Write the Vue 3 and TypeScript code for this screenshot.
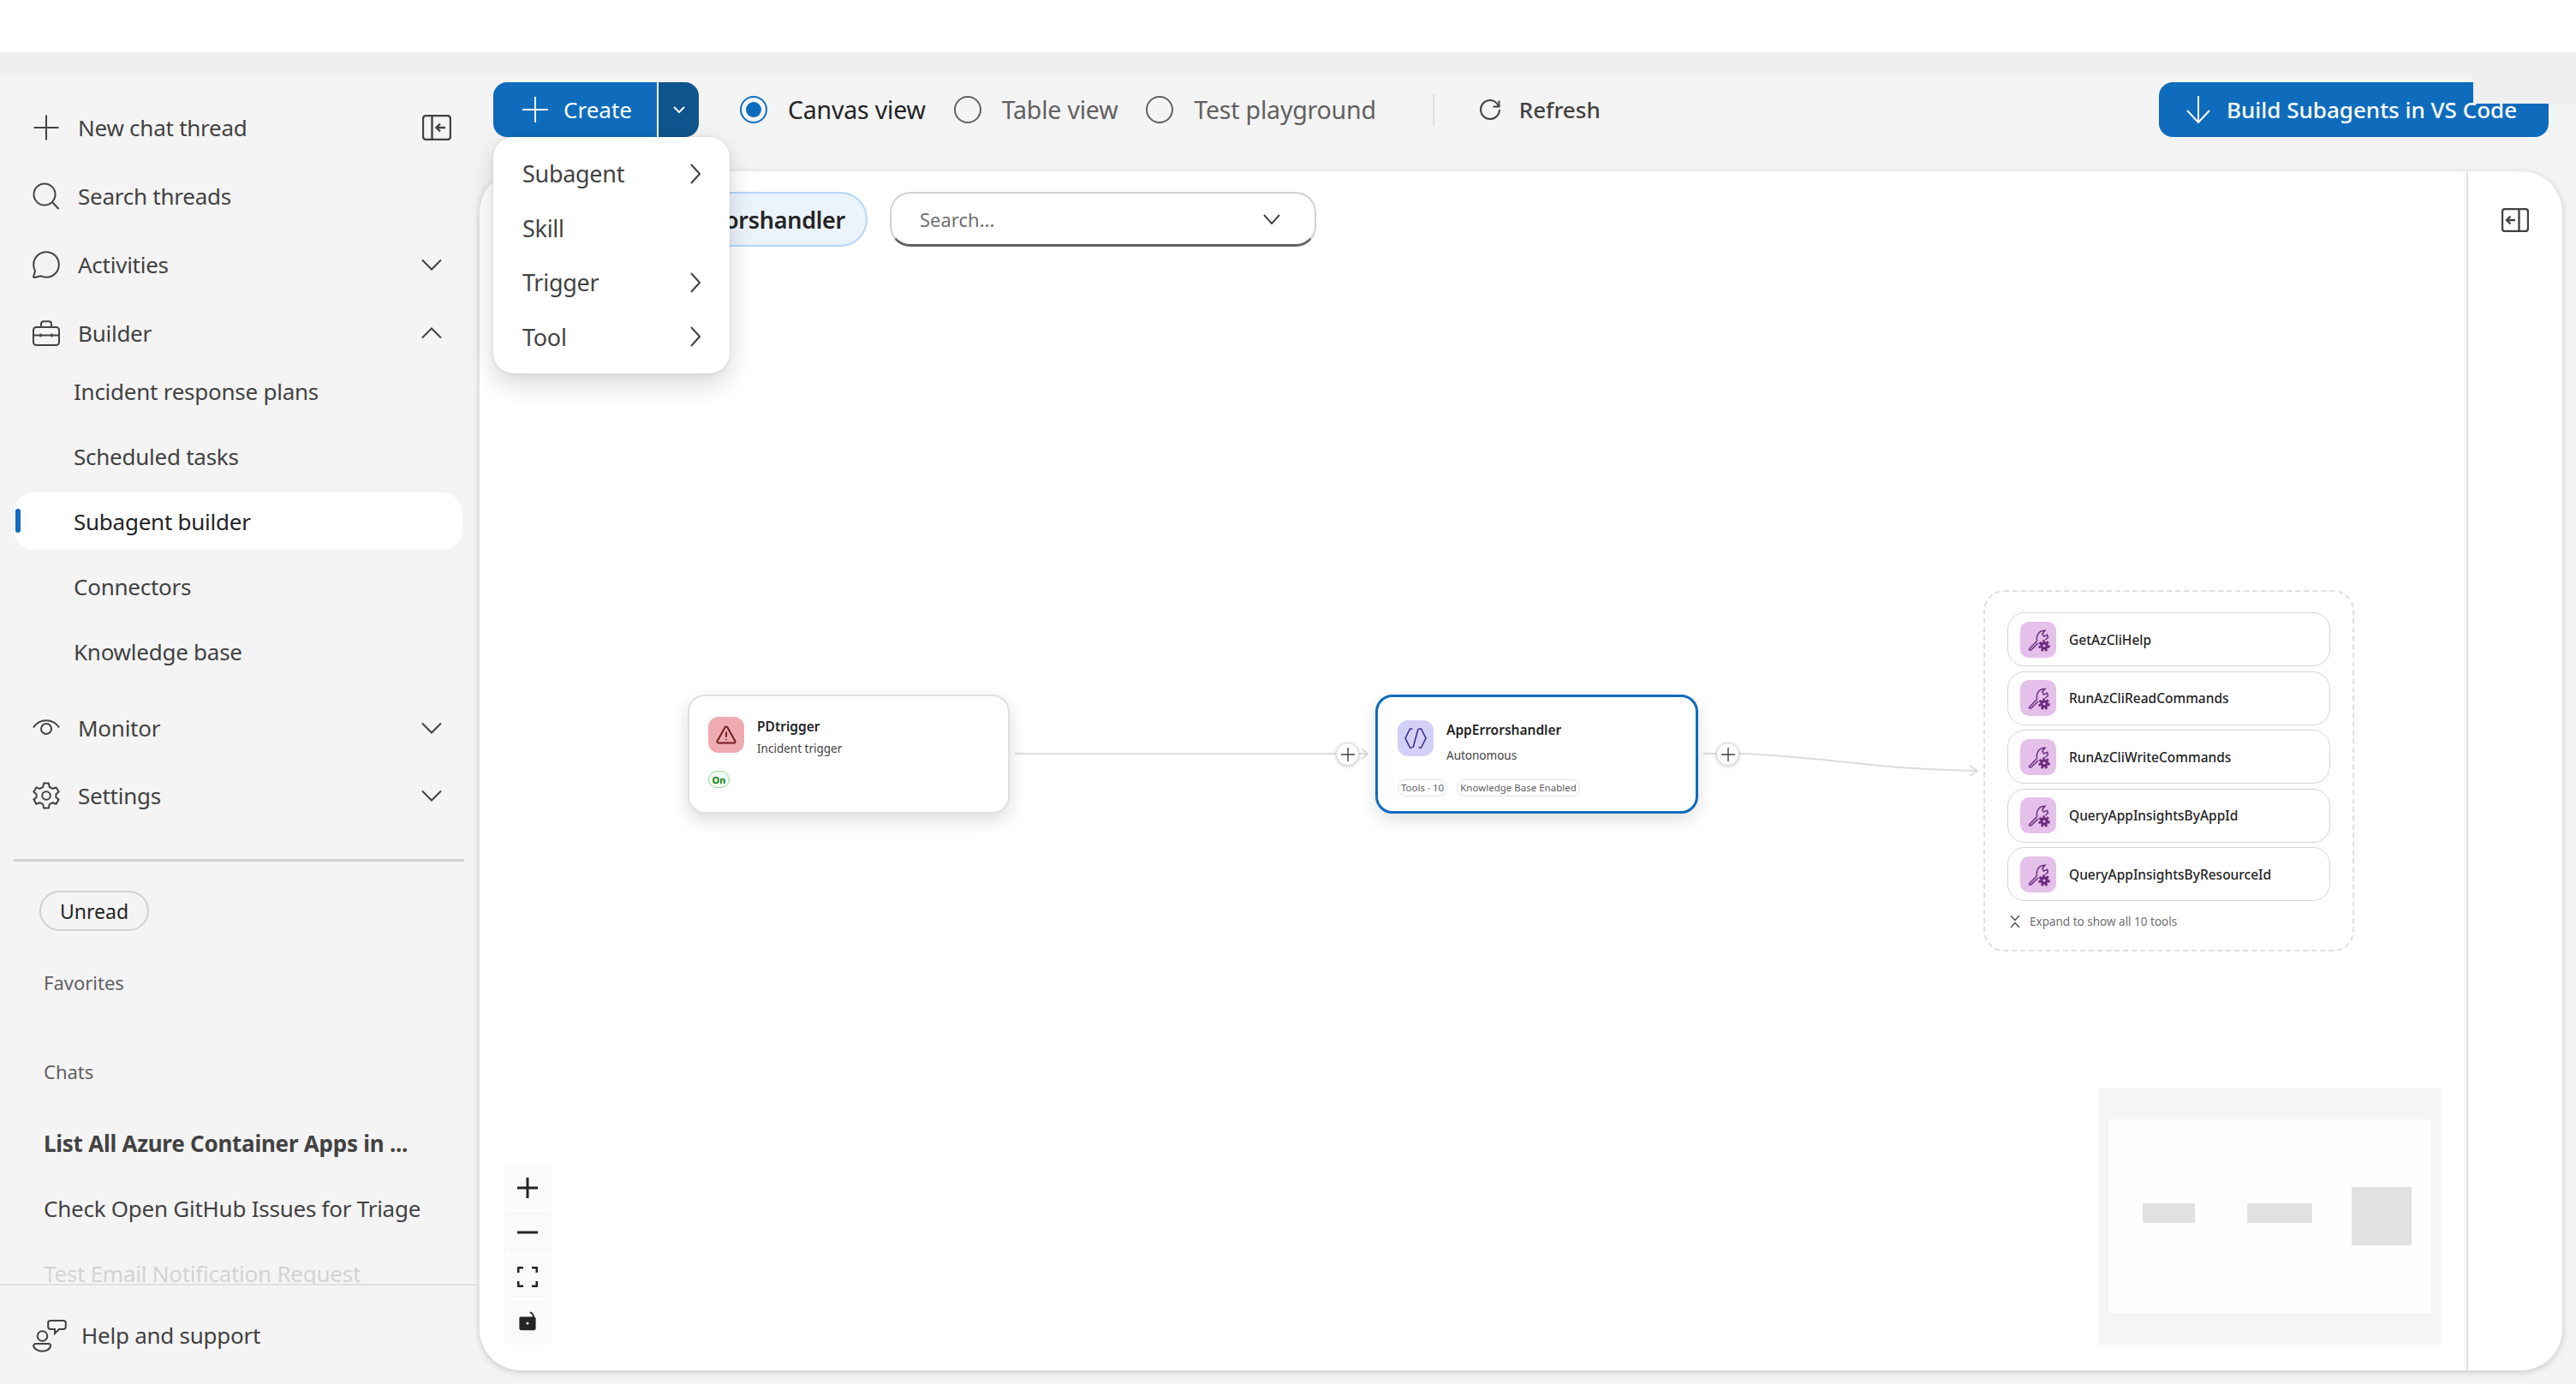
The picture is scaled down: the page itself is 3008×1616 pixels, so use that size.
<script setup lang="ts">
interface SubItem { label: string; active?: boolean }
const subItems: SubItem[] = [
  { label: 'Incident response plans' },
  { label: 'Scheduled tasks' },
  { label: 'Subagent builder', active: true },
  { label: 'Connectors' },
  { label: 'Knowledge base' },
]
const menuItems = [
  { label: 'Subagent', sub: true },
  { label: 'Skill', sub: false },
  { label: 'Trigger', sub: true },
  { label: 'Tool', sub: true },
]
const tools: string[] = [
  'GetAzCliHelp',
  'RunAzCliReadCommands',
  'RunAzCliWriteCommands',
  'QueryAppInsightsByAppId',
  'QueryAppInsightsByResourceId',
]
</script>

<template>
  <div class="app">
    <div class="topbar"></div>
    <div class="band"></div>
    <div class="patch"></div>
    <div class="main">
      <aside class="sidebar">
        <nav class="nav">
          <div class="row">
            <svg class="ico" viewBox="0 0 32 32"><path d="M16 1.5V30.5M1.5 16H30.5" /></svg>
            <span>New chat thread</span>
            <svg class="collapse" viewBox="0 0 34 30"><rect x="1" y="1" width="32" height="28" rx="3.5" /><path d="M11.5 1V29M27 15H17M21 10.5L16.5 15L21 19.5" /></svg>
          </div>
          <div class="row">
            <svg class="ico" viewBox="0 0 32 32"><circle cx="14" cy="14" r="12.5" /><path d="M23 23L30.5 31" /></svg>
            <span>Search threads</span>
          </div>
          <div class="row">
            <svg class="ico" viewBox="0 0 32 32"><path d="M16 1.2C24.2 1.2 30.8 7.8 30.8 16S24.2 30.8 16 30.8C13.6 30.8 11.3 30.2 9.3 29.2L2.4 31C1.6 31.2 1 30.6 1.2 29.8L3 23.5C1.8 21.3 1.2 18.8 1.2 16C1.2 7.8 7.8 1.2 16 1.2Z" /></svg>
            <span>Activities</span>
            <svg class="chev" viewBox="0 0 24 14"><path d="M1 1.5L12 12.5L23 1.5" /></svg>
          </div>
          <div class="row">
            <svg class="ico" viewBox="0 0 32 30"><rect x="1" y="8" width="30" height="21" rx="3.5" /><path d="M10 8V4C10 2.4 11.2 1.2 13 1.2H19C20.8 1.2 22 2.4 22 4V8M1 17.5H31M9.5 15.5V19.5M22.5 15.5V19.5" /></svg>
            <span>Builder</span>
            <svg class="chev" viewBox="0 0 24 14"><path d="M1 12.5L12 1.5L23 12.5" /></svg>
          </div>
        </nav>
        <div class="subs">
          <div v-for="s in subItems" :key="s.label" class="sub" :class="{ active: s.active }">
            <i v-if="s.active" class="bar"></i>
            <span>{{ s.label }}</span>
          </div>
        </div>
        <div class="row monitor">
          <svg class="ico eye" viewBox="0 0 32 20"><path d="M1 9.5C4.5 4 10 1.2 16 1.2S27.5 4 31 9.5" /><circle cx="16" cy="11" r="6" /></svg>
          <span>Monitor</span>
          <svg class="chev" viewBox="0 0 24 14"><path d="M1 1.5L12 12.5L23 1.5" /></svg>
        </div>
        <div class="row settings">
          <svg class="ico" viewBox="0 0 32 32"><path d="M13.2 1.6H18.8L19.8 6L23.5 7.9L27.6 6.5L30.6 11.6L27.4 14.5V18L30.6 20.6L27.6 25.7L23.5 24.2L19.8 26.1L18.8 30.4H13.2L12.2 26.1L8.5 24.2L4.4 25.7L1.4 20.6L4.6 18V14.5L1.4 11.6L4.4 6.5L8.5 7.9L12.2 6Z" /><circle cx="16" cy="16" r="4.8" /></svg>
          <span>Settings</span>
          <svg class="chev" viewBox="0 0 24 14"><path d="M1 1.5L12 12.5L23 1.5" /></svg>
        </div>
        <div class="rule"></div>
        <div class="chats">
          <div class="pill">Unread</div>
          <div class="label favorites">Favorites</div>
          <div class="label chats-title">Chats</div>
          <div class="chat strong">List All Azure Container Apps in ...</div>
          <div class="chat">Check Open GitHub Issues for Triage</div>
          <div class="chat faded">Test Email Notification Request</div>
        </div>
        <div class="help">
          <svg class="help-ico" viewBox="0 0 40 40"><circle cx="11.5" cy="21" r="5.8" /><path d="M4 30H19C20.5 30 21 31 21 32C21 36 16.5 38.8 11.5 38.8S1.2 36 1.2 32C1.2 31 2.5 30 4 30Z" /><path d="M21 3H36C37.6 3 38.8 4.2 38.8 5.5V10C38.8 11.6 37.6 13 36 13H31L26 18V13H21C19.4 13 18.2 11.6 18.2 10V5.5C18.2 4.2 19.4 3 21 3Z" /></svg>
          <span>Help and support</span>
        </div>
      </aside>

      <section class="content">
        <div class="toolbar">
          <div class="split">
            <div class="split-main">
              <svg class="plus-w" viewBox="0 0 30 30"><path d="M15 0V30M0 15H30" /></svg>
              <span>Create</span>
            </div>
            <div class="split-drop">
              <svg viewBox="0 0 14 8"><path d="M1 1L7 7L13 1" /></svg>
            </div>
            <div class="menu">
              <div v-for="m in menuItems" :key="m.label" class="menu-item">
                <span>{{ m.label }}</span>
                <svg v-if="m.sub" viewBox="0 0 12 24"><path d="M1 1L11 12L1 23" /></svg>
              </div>
            </div>
          </div>
          <div class="radio on-radio"><i class="dot"></i><span>Canvas view</span></div>
          <div class="radio table-radio"><i class="dot off"></i><span>Table view</span></div>
          <div class="radio test-radio"><i class="dot off"></i><span>Test playground</span></div>
          <div class="vsep"></div>
          <div class="refresh">
            <svg viewBox="0 0 32 32"><path d="M25.5 5.5V12.5H18.5" /><path d="M25 12C22.8 7.6 18.8 5 15 5C8.9 5 4 9.9 4 16S8.9 27 15 27S26 22.1 26 16" /></svg>
            <span>Refresh</span>
          </div>
          <div class="build">
            <svg viewBox="0 0 28 32"><path d="M14 0V30M1 17L14 31L27 17" /></svg>
            <span>Build Subagents in VS Code</span>
          </div>
        </div>

        <div class="canvas">
          <div class="stage">
            <div class="filters">
              <div class="chip">AppErrorshandler</div>
              <div class="search">
                <span>Search...</span>
                <svg viewBox="0 0 20 12"><path d="M1 1L10 11L19 1" /></svg>
              </div>
            </div>

            <svg class="edges" viewBox="0 0 2320 1400">
              <path d="M625 680H1000" />
              <path d="M1025 680H1036M1030 674L1037 680L1030 686" />
              <path d="M1429 680H1444" />
              <path d="M1470 680C1560 682 1620 698 1748 700M1740 694L1749 700L1740 706" />
            </svg>

            <div class="node pd">
              <div class="node-head">
                <div class="nico red">
                  <svg viewBox="0 0 24 24"><path d="M10.6 3.2C11.2 2.2 12.8 2.2 13.4 3.2L22.4 19.2C23 20.2 22.2 21.4 21 21.4H3C1.8 21.4 1 20.2 1.6 19.2Z" /><path d="M12 8.4V14.8M12 17.2V18.2" /></svg>
                </div>
                <div class="ntext">
                  <div class="ntitle">PDtrigger</div>
                  <div class="nsub">Incident trigger</div>
                </div>
              </div>
              <div class="on">On</div>
            </div>

            <div class="add a1"><svg viewBox="0 0 16 16"><path d="M8 0V16M0 8H16" /></svg></div>

            <div class="node agent">
              <div class="node-head">
                <div class="nico violet">
                  <svg viewBox="0 0 26 24"><path d="M9.5 1H6.5L1 12L6.5 23H9M16.5 1H19.5L25 12L19.5 23H16.5M16 1L10 23" /></svg>
                </div>
                <div class="ntext agent-text">
                  <div class="ntitle">AppErrorshandler</div>
                  <div class="nsub">Autonomous</div>
                </div>
              </div>
              <div class="tags">
                <span class="tag">Tools · 10</span>
                <span class="tag">Knowledge Base Enabled</span>
              </div>
            </div>

            <div class="add a2"><svg viewBox="0 0 16 16"><path d="M8 0V16M0 8H16" /></svg></div>

            <div class="group">
              <div v-for="t in tools" :key="t" class="tool">
                <div class="tico">
                  <svg viewBox="0 0 42 42">
                    <path class="wrench" d="M19.6 22.6L11 31.2C9.8 32.4 11 33.8 12.4 33L13 32.6L21 25M19.6 22.6C18.6 18.8 20 12.2 25.6 10.8L29 10.2L25.8 14.2L27.4 17.2L31.6 15.2L32.4 18.6L29.4 21" />
                    <circle class="gear-teeth" cx="28" cy="28" r="5.6" />
                    <circle class="gear" cx="28" cy="28" r="4.8" />
                    <circle class="gear-hole" cx="28" cy="28" r="1.6" />
                  </svg>
                </div>
                <span>{{ t }}</span>
              </div>
              <div class="expand">
                <svg viewBox="0 0 12 16"><path d="M1 1L6 6.5L11 1M1 15L6 9.5L11 15" /></svg>
                <span>Expand to show all 10 tools</span>
              </div>
            </div>

            <div class="controls">
              <div class="ctl"><svg viewBox="0 0 24 24"><path class="thick" d="M12 0V24M0 12H24" /></svg></div>
              <div class="ctl"><svg viewBox="0 0 24 24"><path class="thick" d="M0 12H24" /></svg></div>
              <div class="ctl"><svg viewBox="0 0 24 24"><path class="corner" d="M1 7V2.5C1 1.6 1.6 1 2.5 1H7M17 1H21.5C22.4 1 23 1.6 23 2.5V7M23 17V21.5C23 22.4 22.4 23 21.5 23H17M7 23H2.5C1.6 23 1 22.4 1 21.5V17" /></svg></div>
              <div class="ctl"><svg viewBox="0 0 24 26"><path class="shackle" d="M15 1.5C18 2 19.5 4.5 19.5 8" /><path class="fill" d="M3.5 7H20C21.5 7 22.4 8 22.4 9.4V21.6C22.4 23 21.5 24 20 24H4C2.6 24 1.6 23 1.6 21.6V9.4C1.6 8 2.2 7 3.5 7Z" /><circle cx="12" cy="15.5" r="2.6" fill="#fafafa" /></svg></div>
            </div>

            <div class="minimap">
              <div class="mm-inner">
                <i class="mm m1"></i>
                <i class="mm m2"></i>
                <i class="mm m3"></i>
              </div>
            </div>
          </div>
          <div class="side">
            <svg viewBox="0 0 32 28"><rect x="1" y="1" width="30" height="26" rx="3" /><path d="M20.5 1V27M16 14H6.5M10.5 9.5L6 14L10.5 18.5" /></svg>
          </div>
        </div>
      </section>
    </div>
  </div>
</template>

<style>
html, body { margin: 0; background: #f4f4f4; }
</style>

<style scoped>
.app {
  position: relative;
  width: 3008px;
  height: 1616px;
  overflow: hidden;
  background: #f4f4f4;
  display: flex;
  flex-direction: column;
  font-family: "Noto Sans", "Open Sans", sans-serif;
  color: #424242;
}
svg { display: block; fill: none; stroke: currentColor; stroke-width: 2; flex: none; }
.topbar { height: 61px; background: #fff; flex: none; }
.band { height: 27px; background: #efefef; flex: none; }
.patch { position: absolute; left: 2888px; top: 61px; width: 120px; height: 60px; background: #efefef; z-index: 5; }
.main { flex: 1; display: flex; min-height: 0; }

/* sidebar */
.sidebar { width: 560px; flex: none; display: flex; flex-direction: column; position: relative; }
.nav { display: flex; flex-direction: column; gap: 16px; padding-top: 29px; }
.row { height: 64px; display: flex; align-items: center; padding: 0 44px 0 38px; font-size: 26px; letter-spacing: -0.25px; position: relative; }
.row > span { margin-left: 21px; flex: 1; }
.ico { width: 32px; height: 32px; }
.eye { height: 20px; }
.collapse { position: absolute; left: 493px; top: 17px; width: 34px; height: 30px; stroke-width: 2.4; }
.chev { width: 24px; height: 14px; }
.subs { display: flex; flex-direction: column; gap: 9px; padding-top: 2px; }
.sub { position: relative; height: 67px; margin: 0 20px 0 16px; display: flex; align-items: center; padding-left: 70px; font-size: 26px; letter-spacing: -0.25px; border-radius: 24px; }
.sub.active { background: #fff; color: #242424; }
.bar { position: absolute; left: 2px; top: 19px; width: 6px; height: 28px; border-radius: 3px; background: #0f6cbd; }
.monitor { margin-top: 24px; }
.settings { margin-top: 15px; }
.rule { height: 3px; background: #d1d1d1; margin: 42px 18px 0 16px; flex: none; }
.chats { flex: 1; min-height: 0; overflow: hidden; padding: 34px 0 0 51px; position: relative; }
.pill { margin-left: -5px; width: 128px; height: 47px; box-sizing: border-box; border: 2px solid #d1d1d1; border-radius: 24px; display: flex; align-items: center; justify-content: center; font-size: 23px; color: #242424; }
.label { font-size: 22px; color: #616161; line-height: 30px; }
.favorites { margin-top: 45px; }
.chats-title { margin-top: 74px; }
.chat { font-size: 26px; line-height: 36px; margin-top: 40px; letter-spacing: -0.25px; white-space: nowrap; }
.chats-title + .chat { margin-top: 51px; }
.strong { font-weight: 700; }
.faded { margin-top: 40px; opacity: 0.18; }
.help { height: 117px; box-sizing: border-box; border-top: 2px solid #e0e0e0; margin-right: 2px; flex: none; display: flex; align-items: center; padding-left: 38px; gap: 17px; font-size: 26px; letter-spacing: -0.25px; }
.help-ico { width: 40px; height: 40px; }

/* content */
.content { flex: 1; min-width: 0; display: flex; flex-direction: column; }
.toolbar { height: 112px; flex: none; display: flex; align-items: flex-start; padding-top: 8px; box-sizing: border-box; position: relative; padding-left: 16px; }
.split { position: relative; width: 240px; height: 64px; display: flex; color: #fff; font-size: 26px; z-index: 4; }
.split-main { width: 191px; background: #0f6cbd; border-radius: 16px 0 0 16px; display: flex; align-items: center; padding-left: 34px; box-sizing: border-box; gap: 18px; }
.plus-w { width: 30px; height: 30px; }
.split-drop { width: 49px; background: #0f548c; border-left: 2px solid #fff; box-sizing: border-box; border-radius: 0 16px 16px 0; display: flex; align-items: center; justify-content: center; }
.split-drop svg { width: 14px; height: 8px; }
.menu { position: absolute; left: 0; top: 64px; width: 276px; height: 276px; background: #fff; border-radius: 24px; box-shadow: 0 12px 30px rgba(0,0,0,.16), 0 0 4px rgba(0,0,0,.1); color: #424242; display: flex; flex-direction: column; box-sizing: border-box; padding: 11px 0; }
.menu-item { flex: 1; display: flex; align-items: center; justify-content: space-between; padding: 0 34px; font-size: 27px; letter-spacing: -0.3px; }
.menu-item svg { width: 12px; height: 24px; }
.radio { display: flex; align-items: center; height: 64px; font-size: 28.5px; letter-spacing: -0.2px; color: #616161; }
.radio span { margin-left: 24px; }
.dot { width: 32px; height: 32px; box-sizing: border-box; border-radius: 50%; border: 2px solid #0f6cbd; position: relative; display: block; flex: none; }
.dot::after { content: ""; position: absolute; inset: 5px; border-radius: 50%; background: #0f6cbd; }
.dot.off { border-color: #616161; }
.dot.off::after { display: none; }
.on-radio { margin-left: 48px; color: #242424; }
.table-radio { margin-left: 33px; }
.test-radio { margin-left: 33px; }
.vsep { width: 2px; height: 36px; background: #e0e0e0; margin: 14px 0 0 66px; }
.refresh { display: flex; align-items: center; height: 64px; margin-left: 50px; gap: 17px; font-size: 26px; font-weight: 500; color: #424242; }
.refresh svg { width: 32px; height: 32px; }
.build { position: absolute; left: 1961px; top: 8px; width: 455px; height: 64px; background: #0f6cbd; border-radius: 16px; color: #fff; display: flex; align-items: center; box-sizing: border-box; padding-left: 32px; gap: 19px; font-size: 26px; font-weight: 500; white-space: nowrap; }
.build svg { width: 28px; height: 32px; }

.canvas { height: 1400px; margin-right: 16px; background: #fff; border-radius: 48px; box-shadow: 0 2px 8px rgba(0,0,0,.18); display: flex; flex: none; overflow: hidden; }
.stage { position: relative; flex: 1; min-width: 0; }
.side { width: 112px; flex: none; border-left: 2px solid #e0e0e0; box-shadow: -2px 0 4px rgba(0,0,0,.04); box-sizing: border-box; display: flex; justify-content: center; padding-top: 43px; color: #424242; }
.side svg { width: 32px; height: 28px; stroke-width: 2.4; }

.filters { display: flex; gap: 26px; padding: 24px 0 0 153px; }
.chip { width: 300px; height: 64px; box-sizing: border-box; background: #ebf3fc; border: 2px solid #b4d6fa; border-radius: 32px; display: flex; align-items: center; justify-content: flex-end; padding-right: 24px; font-size: 27px; font-weight: 600; letter-spacing: -0.3px; color: #242424; }
.search { width: 498px; height: 64px; box-sizing: border-box; border: 2px solid #d1d1d1; border-bottom: 3px solid #616161; border-radius: 24px; display: flex; align-items: center; justify-content: space-between; padding: 0 40px 0 33px; font-size: 22px; color: #707070; }
.search svg { width: 20px; height: 12px; color: #424242; }

.edges { position: absolute; left: 0; top: 0; width: 2320px; height: 1400px; stroke: #dcdcdc; color: #dcdcdc; pointer-events: none; }
.node { position: absolute; top: 611px; width: 377px; height: 139px; box-sizing: border-box; background: #fff; border-radius: 20px; }
.pd { left: 243px; width: 376px; border: 2px solid #e0e0e0; box-shadow: 0 8px 20px rgba(0,0,0,.14); padding: 24px 0 0 22px; }
.agent { left: 1046px; border: 3px solid #0f6cbd; box-shadow: 0 8px 20px rgba(0,0,0,.12); padding: 27px 0 0 23px; }
.node-head { display: flex; gap: 15px; }
.nico { width: 42px; height: 42px; border-radius: 12px; display: flex; align-items: center; justify-content: center; flex: none; }
.red { background: #eeacb2; color: #751d1f; }
.red svg { width: 24px; height: 24px; }
.violet { background: #d4cff7; color: #3b2e8c; }
.violet svg { width: 26px; height: 24px; stroke-width: 1.6; }
.ntext { padding-top: 0; }
.ntitle { font-size: 15.5px; font-weight: 600; line-height: 22px; color: #242424; white-space: nowrap; }
.nsub { font-size: 13.5px; line-height: 20px; margin-top: 5px; color: #424242; white-space: nowrap; }
.agent-text .nsub { margin-top: 9px; }
.on { margin-top: 16px; width: 25px; height: 20px; box-sizing: border-box; border: 1.5px solid #9fd89f; background: #f1faf1; border-radius: 10px; font-size: 11px; font-weight: 700; color: #107c10; display: flex; align-items: center; justify-content: center; }
.tags { display: flex; gap: 11px; margin-top: 18px; }
.tag { height: 20px; box-sizing: border-box; border: 1.5px solid #e0e0e0; border-radius: 10px; padding: 0 3px; font-size: 11.5px; line-height: 17px; color: #616161; white-space: nowrap; }
.add { position: absolute; top: 667px; width: 27px; height: 27px; border-radius: 50%; background: #fff; box-sizing: border-box; border: 1px solid #d8d8d8; box-shadow: 0 1px 4px rgba(0,0,0,.2); display: flex; align-items: center; justify-content: center; color: #424242; }
.add svg { width: 16px; height: 16px; stroke-width: 1.4; }
.a1 { left: 1000px; }
.a2 { left: 1444px; }

.group { position: absolute; left: 1756px; top: 489px; width: 433px; height: 422px; box-sizing: border-box; border: 2px dashed #e0e0e0; border-radius: 24px; padding: 24px 26px 0 26px; display: flex; flex-direction: column; gap: 5.5px; }
.tool { height: 63px; flex: none; box-sizing: border-box; border: 1.5px solid #d6d6d6; border-radius: 20px; display: flex; align-items: center; padding-left: 14px; gap: 15px; font-size: 15.5px; font-weight: 500; color: #242424; }
.tico { width: 42px; height: 42px; border-radius: 10px; background: #e5c0ea; flex: none; color: #6b2a7e; }
.tico svg { width: 42px; height: 42px; }
.wrench { stroke-width: 1.4; }
.gear-teeth { stroke: #6b2a7e; stroke-width: 2.4; stroke-dasharray: 2.6 2.2; fill: none; }
.gear { fill: #6b2a7e; stroke: none; }
.gear-hole { fill: #e5c0ea; stroke: none; }
.expand { display: flex; align-items: center; gap: 11px; margin: 9px 0 0 3px; font-size: 13.5px; color: #707070; }
.expand svg { width: 12px; height: 16px; stroke-width: 1.2; color: #424242; }

.controls { position: absolute; left: 30px; top: 1162px; display: flex; flex-direction: column; gap: 2px; box-shadow: 0 0 4px rgba(0,0,0,.08); }
.ctl { width: 52px; height: 50px; background: #fafafa; display: flex; align-items: center; justify-content: center; color: #242424; }
.ctl svg { width: 24px; height: 24px; }
.thick { stroke-width: 3; }
.corner { stroke-width: 3; }
.shackle { stroke-width: 2; }
.fill { fill: #242424; stroke: none; }

.minimap { position: absolute; left: 1890px; top: 1070px; width: 400px; height: 300px; background: #f5f5f5; display: flex; align-items: center; justify-content: center; }
.mm-inner { position: relative; width: 376px; height: 226px; background: #fefefe; }
.mm { position: absolute; background: #e1e1e1; display: block; }
.m1 { left: 40px; top: 98px; width: 61px; height: 23px; }
.m2 { left: 162px; top: 98px; width: 76px; height: 23px; }
.m3 { left: 284px; top: 79px; width: 70px; height: 68px; }
</style>
